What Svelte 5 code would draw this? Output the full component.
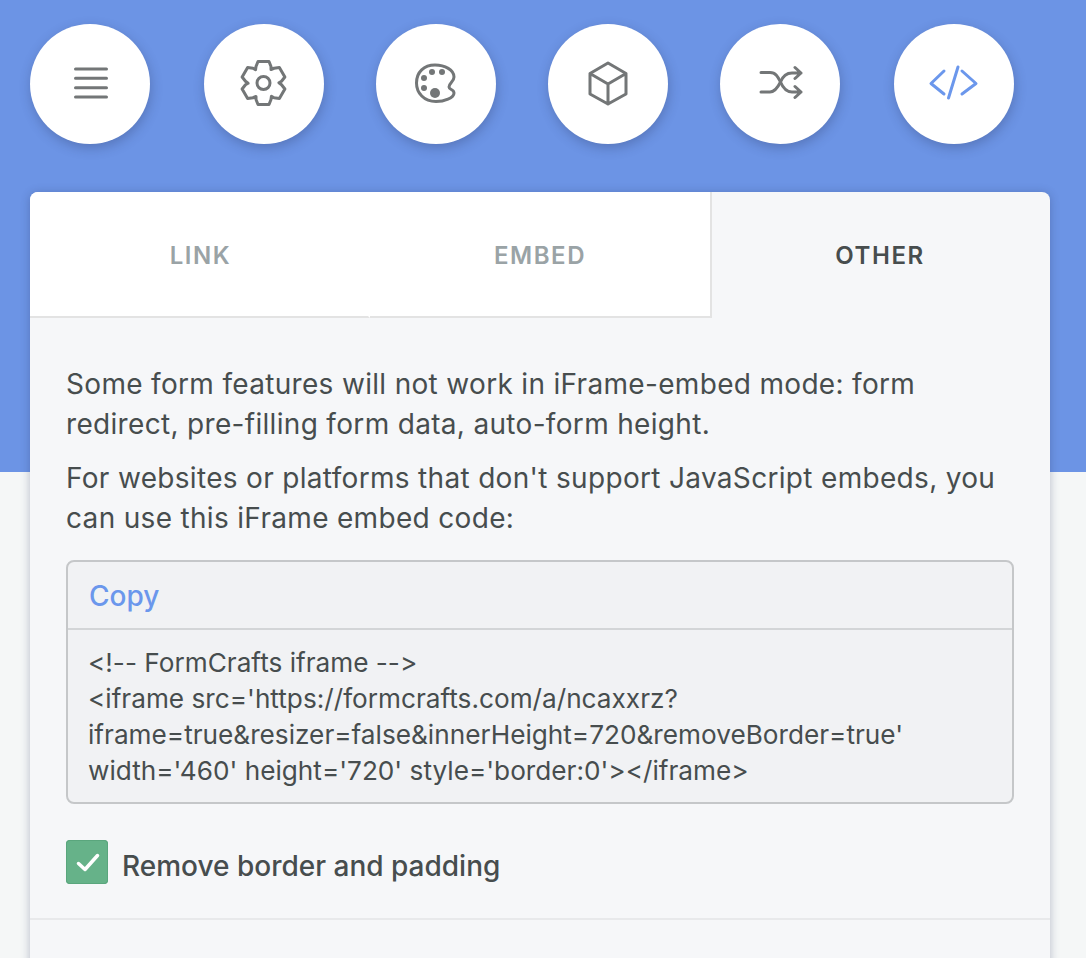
<script lang="ts">
	// six-toothed cog outline, built around the centre of a 48 box
	const cogPath = (() => {
		const cx = 23.5;
		const cy = 23;
		const shape = [
			[-7.5, -16.5],
			[-5.5, -21.5],
			[5.5, -21.5],
			[7.5, -16.5],
			[7.5, -13.5]
		];
		let d = '';
		for (let k = 0; k < 6; k++) {
			const a = (k * Math.PI) / 3;
			for (const [x, y] of shape) {
				const px = cx + x * Math.cos(a) - y * Math.sin(a);
				const py = cy + x * Math.sin(a) + y * Math.cos(a);
				d += `${d ? 'L' : 'M'}${px.toFixed(2)} ${py.toFixed(2)}`;
			}
		}
		return d + 'Z';
	})();

	const tabs = [
		{ label: 'LINK', state: 'idle first' },
		{ label: 'EMBED', state: 'idle before' },
		{ label: 'OTHER', state: 'active' }
	];

	const codeLines = [
		"<!-- FormCrafts iframe -->",
		"<iframe src='https://formcrafts.com/a/ncaxxrz?",
		"iframe=true&resizer=false&innerHeight=720&removeBorder=true'",
		"width='460' height='720' style='border:0'></iframe>"
	];
</script>

<div class="page">
	<nav class="toolbar">
		<button class="round" aria-label="Menu">
			<svg viewBox="0 0 48 48"><path d="M9.500 9H40.500M9.500 18.300H40.500M9.500 27.700H40.500M9.500 37H40.500" /></svg>
		</button>
		<button class="round" aria-label="Settings">
			<svg viewBox="0 0 48 48"><path d={cogPath} /><circle cx="23.500" cy="23" r="6.500" /></svg>
		</button>
		<button class="round" aria-label="Theme">
			<svg viewBox="0 0 48 48">
				<path d="M23 5C33 5 42 10 42 17C42 22 37 23 37 27C37 30 42 29 42 33C42 38 32 41.500 24 41.500C12 41.500 4.500 33 4.500 23C4.500 12 12 5 23 5Z" />
				<circle class="dot" cx="23" cy="33" r="5" />
				<circle class="dot" cx="12" cy="28" r="3" />
				<circle class="dot" cx="12" cy="18" r="3" />
				<circle class="dot" cx="20" cy="12" r="3" />
				<circle class="dot" cx="30" cy="12" r="3" />
			</svg>
		</button>
		<button class="round" aria-label="Fields">
			<svg viewBox="0 0 48 48"><path d="M24 3L42 13.500V34L24 44L6 34V13.500ZM6 13.500L24 24L42 13.500M24 24V44" /></svg>
		</button>
		<button class="round" aria-label="Logic">
			<svg viewBox="0 0 48 48">
				<path d="M5 12.500H14C20 12.500 22 17 24.500 22C27 28 30 32 36 32H45M39 26.500L45 32L39 37.500" />
				<path d="M5 32H14C19 32 22 27 24.500 22C26.500 17 30 13 36 13H45M39 7.500L45 13L39 18.500" />
			</svg>
		</button>
		<button class="round current" aria-label="Share">
			<svg viewBox="0 0 48 48"><path d="M14 11L1 23.500L14 34M32 11L46 23.500L32 34M28 7L18.500 38" /></svg>
		</button>
	</nav>

	<section class="card">
		<div class="tabs">
			{#each tabs as tab}
				<div class="tab {tab.state}">{tab.label}</div>
			{/each}
		</div>

		<div class="body">
			<p>Some form features will not work in iFrame-embed mode: form redirect, pre-filling form data, auto-form height.</p>
			<p>For websites or platforms that don't support JavaScript embeds, you can use this iFrame embed code:</p>

			<div class="snippet">
				<div class="snippet-head">Copy</div>
				<div class="snippet-code">
					{#each codeLines as line}
						<div>{line}</div>
					{/each}
				</div>
			</div>

			<div class="check-row">
				<span class="check">
					<svg viewBox="0 0 42 44"><path d="M12.500 23.500L19 29.500L31.500 15.500" /></svg>
				</span>
				<span class="check-label">Remove border and padding</span>
			</div>
		</div>

		<div class="foot"></div>
	</section>
</div>

<style>
	:global(body) {
		margin: 0;
	}

	.page {
		height: 958px;
		overflow: hidden;
		box-sizing: border-box;
		padding: 24px 36px 0 30px;
		background: linear-gradient(#6c94e5 472px, #f5f7f7 472px);
		font-family: Inter, 'Liberation Sans', sans-serif;
		font-feature-settings: 'calt' 0;
		color: #474d4e;
	}

	.toolbar {
		display: flex;
		gap: 52px;
	}

	.round {
		display: flex;
		align-items: center;
		justify-content: center;
		flex: none;
		width: 120px;
		height: 120px;
		padding: 0;
		border: 0;
		border-radius: 50%;
		background: #fff;
		box-shadow: 1px 4px 12px rgba(40, 50, 90, 0.3);
	}

	.round:nth-child(2),
	.round:nth-child(6) {
		margin-left: 2px;
	}

	.round svg {
		width: 48px;
		height: 48px;
		overflow: visible;
		fill: none;
		stroke: #737677;
		stroke-width: 3;
		stroke-linecap: round;
		stroke-linejoin: round;
	}

	.round .dot {
		fill: #737677;
		stroke: none;
	}

	.round.current svg {
		stroke: #6b97ec;
	}

	.card {
		width: 1020px;
		margin-top: 48px;
		border-radius: 8px 8px 0 0;
		background: #f6f7f9;
		box-shadow: 0 1px 10px rgba(40, 50, 90, 0.3);
		overflow: hidden;
	}

	.tabs {
		display: grid;
		grid-template-columns: 340px 342px 338px;
		height: 126px;
	}

	.tab {
		display: flex;
		align-items: center;
		justify-content: center;
		box-sizing: border-box;
		font-size: 24px;
		font-weight: 600;
		letter-spacing: 0.065em;
	}

	.tab.idle {
		padding-top: 2px;
		color: #9aa3a6;
		background: #fff;
		border-bottom: 2px solid #e3e3e3;
		border-right: 2px solid #fff;
	}

	.tab.first {
		padding-left: 3px;
	}

	.tab.before {
		border-right-color: #e3e3e3;
	}

	.tab.active {
		padding-right: 2px;
		color: #474d4e;
	}

	.body {
		padding: 46px 36px 0;
	}

	p {
		margin: 0 0 14px;
		font-size: 28px;
		line-height: 40px;
		letter-spacing: 0.32px;
	}

	.snippet {
		margin-top: 22px;
		border: 2px solid #c5c7c9;
		border-radius: 8px;
		background: #f1f2f4;
	}

	.snippet-head {
		height: 66px;
		padding-left: 21px;
		border-bottom: 2px solid #d3d5d7;
		font-size: 28px;
		font-weight: 500;
		line-height: 68px;
		color: #6b97ec;
	}

	.snippet-code {
		padding: 15px 20px 13px;
		font-size: 26.200px;
		line-height: 36px;
	}

	.check-row {
		display: flex;
		align-items: center;
		gap: 14px;
		height: 44px;
		margin-top: 36px;
	}

	.check {
		width: 42px;
		height: 44px;
		border-radius: 4px;
		background: #66b289;
		box-shadow: inset 0 0 0 1px #5aa67d;
	}

	.check svg {
		display: block;
		width: 42px;
		height: 44px;
		fill: none;
		stroke: #fff;
		stroke-width: 3.500;
		stroke-linecap: round;
		stroke-linejoin: round;
	}

	.check-label {
		padding-top: 8px;
		font-size: 28px;
		font-weight: 500;
	}

	.foot {
		height: 60px;
		margin-top: 34px;
		border-top: 2px solid #e8e9eb;
	}
</style>
